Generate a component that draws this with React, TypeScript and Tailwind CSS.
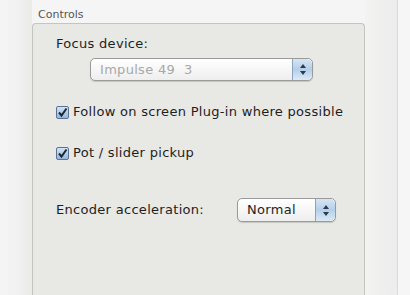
import React from "react";

function Stepper({ w = 20 }: { w?: number }) {
  return (
    <div
      className="h-full flex flex-col items-center justify-center gap-[3px] border-l border-[#8aa2bd] bg-gradient-to-b from-[#d6e5f4] via-[#b4cfea] to-[#dceaf7] rounded-r-[5px]"
      style={{ width: w }}
    >
      <svg width="6" height="4" viewBox="0 0 6 4"><path d="M0 4 L3 0 L6 4 Z" fill="#2d3a4a" /></svg>
      <svg width="6" height="4" viewBox="0 0 6 4"><path d="M0 0 L3 4 L6 0 Z" fill="#2d3a4a" /></svg>
    </div>
  );
}

function Check() {
  return (
    <div className="w-[13px] h-[13px] shrink-0 rounded-[2px] border border-[#5a7394] bg-gradient-to-b from-[#d3e3f3] to-[#95b7dc] flex items-center justify-center">
      <svg width="11" height="11" viewBox="0 0 11 11">
        <path d="M2 5.5 L4.5 8.5 L9.5 1.5" fill="none" stroke="#1d2633" strokeWidth="2" />
      </svg>
    </div>
  );
}

export default function App() {
  return (
    <div
      className="w-[410px] h-[295px] bg-[#f5f5f5] flex overflow-hidden text-[#1e1e1e] tracking-[0.3px]"
      style={{ fontFamily: '"DejaVu Sans", "Liberation Sans", sans-serif' }}
    >
      <div className="w-[32px] shrink-0 bg-gradient-to-r from-[#f4f4f4] via-[#f2f2f2] to-[#eaeae8]" />
      <div className="w-[333px] shrink-0 flex flex-col">
        <div className="h-[23px] pl-[6px] pt-[8px] text-[11px] leading-[13px] text-[#555] tracking-normal">Controls</div>
        <div className="flex-1 bg-[#e8e8e5] border-t border-l border-r border-[#c4c4c2] rounded-t-[4px] pl-[23px] pt-[12px]">
          <div className="text-[13px] leading-[16px]">Focus device:</div>
          <div className="mt-[6px] ml-[34px] w-[223px] h-[23px] flex rounded-[5px] border border-[#9a9a9a] bg-gradient-to-b from-[#ffffff] to-[#eeeeee] shadow-[0_1px_1px_rgba(0,0,0,0.15)] overflow-hidden">
            <div className="flex-1 pl-[9px] flex items-center text-[13px] text-[#a8a8a8]">Impulse 49&nbsp;&nbsp;3</div>
            <Stepper w={20} />
          </div>
          <div className="mt-[23px] flex items-center gap-[4px]">
            <Check />
            <span className="text-[13px] leading-[16px]">Follow on screen Plug-in where possible</span>
          </div>
          <div className="mt-[25px] flex items-center gap-[4px]">
            <Check />
            <span className="text-[13px] leading-[16px]">Pot / slider pickup</span>
          </div>
          <div className="mt-[37px] flex items-center">
            <span className="text-[13px] leading-[16px] w-[181px]">Encoder acceleration:</span>
            <div className="w-[99px] h-[24px] flex rounded-[5px] border border-[#9a9a9a] bg-gradient-to-b from-[#ffffff] to-[#eeeeee] shadow-[0_1px_1px_rgba(0,0,0,0.15)] overflow-hidden">
              <div className="flex-1 pl-[9px] flex items-center text-[13px]">Normal</div>
              <Stepper w={20} />
            </div>
          </div>
        </div>
      </div>
      <div className="w-[33px] shrink-0 bg-gradient-to-r from-[#f3f3f2] via-[#efefef] to-[#ededed] border-r border-[#dadada]" />
      <div className="flex-1 bg-[#f6f6f6]" />
    </div>
  );
}
